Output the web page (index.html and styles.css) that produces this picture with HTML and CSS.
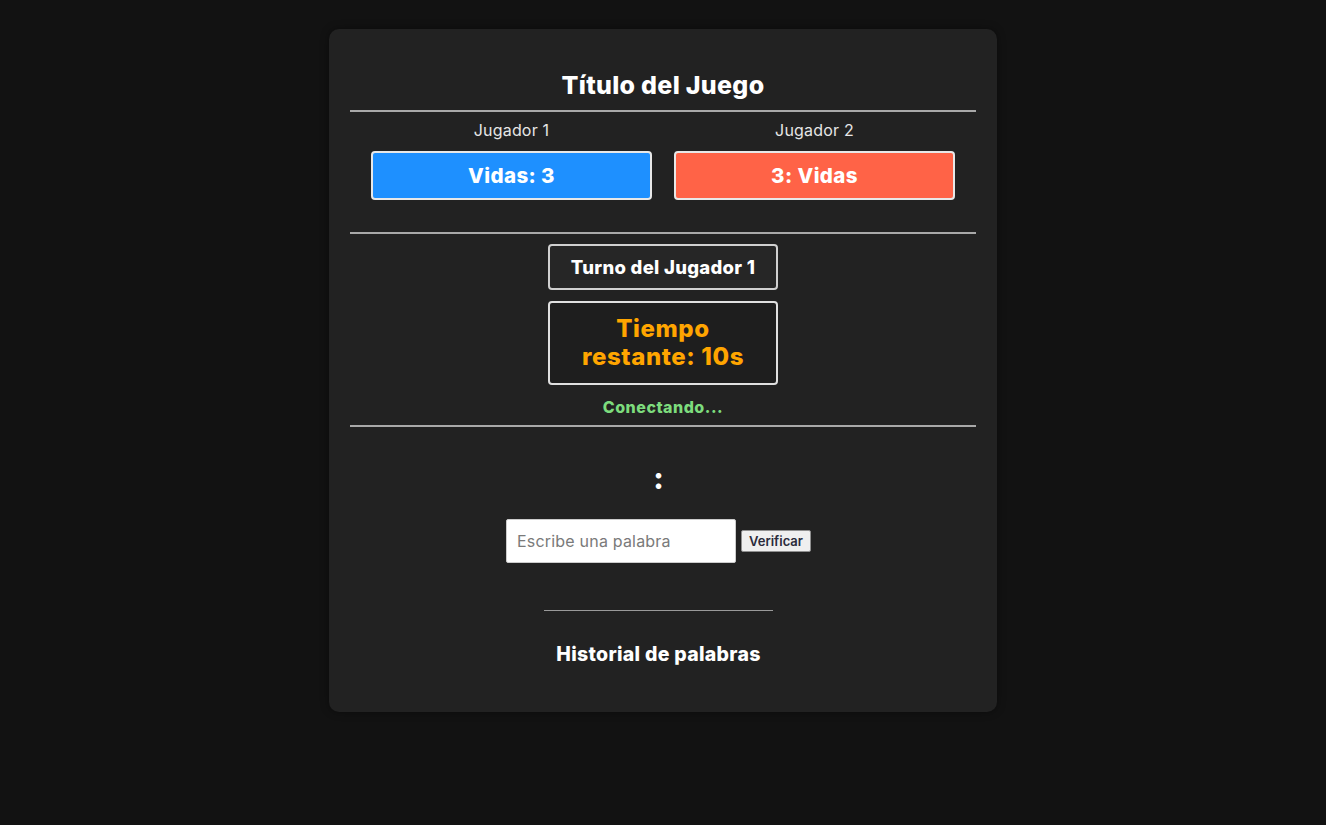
FILE: index.html
```html
<!DOCTYPE html>
<html lang="es">
<head>
<meta charset="utf-8">
<title>Juego</title>
<link rel="stylesheet" href="styles.css">
</head>
<body>
<main class="card">
  <h1 class="title">Título del Juego</h1>
  <hr class="rule">
  <section class="players">
    <div class="player">
      <div class="player-name">Jugador 1</div>
      <div class="lives lives-blue">Vidas: 3</div>
    </div>
    <div class="player">
      <div class="player-name">Jugador 2</div>
      <div class="lives lives-red">3: Vidas</div>
    </div>
  </section>
  <hr class="rule">
  <section class="status">
    <div class="turn">Turno del Jugador 1</div>
    <div class="timer">Tiempo restante: 10s</div>
    <div class="conn">Conectando...</div>
  </section>
  <hr class="rule">
  <section class="play">
    <div class="word">:</div>
    <div class="form">
      <input class="input" type="text" placeholder="Escribe una palabra">
      <button class="btn">Verificar</button>
    </div>
    <hr class="rule-short">
    <h2 class="history">Historial de palabras</h2>
  </section>
</main>
</body>
</html>
```
FILE: styles.css
```css
html, body {
  margin: 0;
  padding: 0;
}
body {
  background: #121212;
  font-family: Inter, "Noto Sans", sans-serif;
  color: #fff;
  min-height: 825px;
  display: flex;
  justify-content: center;
  align-items: flex-start;
}
.card {
  box-sizing: border-box;
  width: 668px;
  margin-top: 29px;
  height: 683px;
  background: #222222;
  border-radius: 10px;
  padding: 40px 21px 20px;
  box-shadow: 0 0 8px rgba(0,0,0,0.4);
}
.title {
  margin: 0;
  font-size: 25px;
  font-weight: 800;
  text-align: center;
  line-height: 32px;
  letter-spacing: 0.3px;
}
.rule {
  border: 0;
  height: 2px;
  background: #a9a9a9;
  margin: 9px 0 0;
}
.players {
  display: flex;
  gap: 22px;
  padding: 8px 21px 32px;
}
.player {
  flex: 1;
  display: flex;
  flex-direction: column;
  align-items: stretch;
}
.player-name {
  text-align: center;
  font-size: 16px;
  line-height: 20px;
  color: #e6e6e6;
  margin-bottom: 11px;
  letter-spacing: 0.2px;
}
.lives {
  box-sizing: border-box;
  height: 49px;
  border: 2px solid #e8e8e8;
  border-radius: 4px;
  display: flex;
  align-items: center;
  justify-content: center;
  font-size: 20.5px;
  font-weight: 800;
  letter-spacing: 0.4px;
}
.lives-blue { background: #1e90ff; }
.lives-red { background: #ff6347; }
.players + .rule { margin-top: 0; }
.status {
  display: flex;
  flex-direction: column;
  align-items: center;
  padding-top: 10px;
}
.turn {
  box-sizing: border-box;
  width: 230px;
  height: 46px;
  border: 2px solid #d0d0d0;
  border-radius: 4px;
  background: #262626;
  display: flex;
  align-items: center;
  justify-content: center;
  font-size: 18.5px;
  font-weight: 800;
  letter-spacing: 0.3px;
}
.timer {
  box-sizing: border-box;
  width: 230px;
  height: 84px;
  margin-top: 11px;
  border: 2px solid #e0e0e0;
  border-radius: 4px;
  background: #1e1e1e;
  display: flex;
  align-items: center;
  justify-content: center;
  text-align: center;
  padding: 0 20px;
  color: #ffa500;
  font-size: 24px;
  font-weight: 800;
  line-height: 28px;
  letter-spacing: 0.6px;
}
.conn {
  margin-top: 9px;
  color: #7ddc7d;
  font-size: 16px;
  font-weight: 800;
  line-height: 26px;
  letter-spacing: 0.5px;
}
.status + .rule { margin-top: 5px; }
.play {
  display: flex;
  flex-direction: column;
  align-items: center;
  padding-top: 34px;
  padding-right: 9px;
}
.word {
  font-size: 30px;
  font-weight: 800;
  line-height: 34px;
}
.form {
  display: flex;
  align-items: center;
  gap: 5px;
  margin-top: 24px;
}
.input {
  box-sizing: border-box;
  width: 230px;
  height: 44px;
  border: 1px solid #ccc;
  border-radius: 2px;
  background: #fff;
  padding: 0 10px;
  font-family: Inter, "Noto Sans", sans-serif;
  font-size: 16px;
  letter-spacing: 0.2px;
  color: #333;
}
.input::placeholder { color: #7a7a7a; }
.btn {
  box-sizing: border-box;
  height: 22px;
  width: 70px;
  padding: 0 4px;
  border: 1px solid #8f8f8f;
  border-radius: 2px;
  background: #efefef;
  color: #2a2a3a;
  font-family: Inter, "Noto Sans", sans-serif;
  font-size: 13px;
  font-weight: 600;
}
.rule-short {
  width: 229px;
  border: 0;
  height: 1px;
  background: #9a9a9a;
  margin: 47px 0 0;
}
.history {
  margin: 31px 0 0;
  font-size: 19.5px;
  font-weight: 800;
  line-height: 24px;
  letter-spacing: 0.3px;
}
```
